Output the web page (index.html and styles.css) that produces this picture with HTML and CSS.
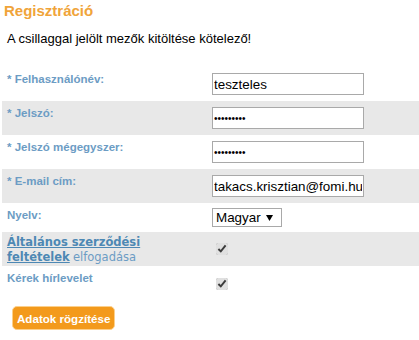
FILE: index.html
```html
<!DOCTYPE html>
<html lang="hu">
<head>
<meta charset="UTF-8" />
<title>Regisztráció</title>
<link rel="stylesheet" href="styles.css">
</head>
<body>
  <h2 class="title">Regisztráció</h2>
  <p class="note">A csillaggal jelölt mezők kitöltése kötelező!</p>
  <form>
    <table class="reg">
      <tr>
        <td class="lbl">* Felhasználónév:</td>
        <td class="fld"><input type="text" class="txt" value="teszteles"></td>
      </tr>
      <tr class="alt">
        <td class="lbl">* Jelszó:</td>
        <td class="fld"><input type="password" class="txt" value="123456789"></td>
      </tr>
      <tr>
        <td class="lbl">* Jelszó mégegyszer:</td>
        <td class="fld"><input type="password" class="txt" value="123456789"></td>
      </tr>
      <tr class="alt">
        <td class="lbl">* E-mail cím:</td>
        <td class="fld"><input type="text" class="txt" value="takacs.krisztian@fomi.hu"></td>
      </tr>
      <tr class="short">
        <td class="lbl">Nyelv:</td>
        <td class="fld">
          <select class="sel">
            <option>Magyar</option>
            <option>English</option>
          </select>
        </td>
      </tr>
      <tr class="alt chk-row">
        <td class="lbl"><div class="terms-wrap"><a href="#" class="terms">Általános szerződési feltételek</a> <span class="plain">elfogadása</span></div></td>
        <td class="fld"><input type="checkbox" class="chk" checked></td>
      </tr>
      <tr class="last">
        <td class="lbl">Kérek hírlevelet</td>
        <td class="fld"><input type="checkbox" class="chk" checked></td>
      </tr>
    </table>
    <button type="button" class="btn">Adatok rögzítése</button>
  </form>
</body>
</html>
```

FILE: styles.css
```css
html, body {
  margin: 0; padding: 0;
  background: #fff;
  font-family: "Liberation Sans", Arial, sans-serif;
  color: #000;
}
.title {
  margin: 0;
  padding: 3px 4px 0 4px;
  font-size: 15px;
  line-height: 16px;
  font-weight: 700;
  color: #f0a43a;
}
.note {
  margin: 13px 0 0 0;
  padding-left: 7px;
  font-size: 13px;
  line-height: 14px;
}
.reg {
  margin: 21px 0 0 2px;
  width: 417px;
  border-collapse: collapse;
}
.reg td {
  padding: 0;
  vertical-align: top;
}
.alt td { background: #e8e8e8; }
.lbl {
  box-sizing: border-box;
  width: 204px;
  height: 34px;
  padding: 6px 0 0 5px !important;
  font-size: 11.5px;
  line-height: 13px;
  font-weight: 700;
  color: #6c9cc4;
}
.fld {
  padding: 6px 0 6px 6px !important;
  line-height: 0;
}
.txt {
  box-sizing: border-box;
  width: 152px;
  height: 22px;
  margin: 0;
  padding: 1px 1px;
  border: 1px solid #a9a9a9;
  font-family: "Liberation Sans", Arial, sans-serif;
  font-size: 13.4px;
  color: #000;
  background: #fff;
}
input[type=password].txt {
  font-size: 10px;
}
.short .lbl { height: 29px; }
.short .fld { padding: 5px 0 5px 6px !important; }
.sel {
  box-sizing: border-box;
  width: 70px;
  height: 19px;
  margin: 0;
  padding: 0 0 0 3px;
  border: 1px solid #a9a9a9;
  border-radius: 0;
  -webkit-appearance: none;
  appearance: none;
  background: #fff url("data:image/svg+xml,%3Csvg xmlns='http://www.w3.org/2000/svg' width='7' height='6'%3E%3Cpath d='M0 0h7L3.5 6z' fill='%23000'/%3E%3C/svg%3E") no-repeat right 8px center;
  font-family: "Liberation Sans", Arial, sans-serif;
  font-size: 13.4px;
  line-height: 17px;
  color: #000;
}
.chk-row .lbl {
  padding-top: 3px !important;
  line-height: 15px;
}
.chk-row .fld { padding-top: 11px !important; }
.terms-wrap { width: 150px; }
.terms {
  font-family: "DejaVu Sans", Verdana, sans-serif;
  font-size: 11.5px;
  color: #4d88b4;
  text-decoration: underline;
}
.plain {
  font-weight: 400;
  font-size: 11.5px;
  font-family: "DejaVu Sans", Verdana, sans-serif;
  color: #6c9cc4;
}
.last .lbl { height: 30px; }
.last .fld { padding-top: 12px !important; padding-bottom: 0 !important; }
.chk {
  display: block;
  margin: 0 0 0 4px;
  width: 12px;
  height: 12px;
  accent-color: #e0e0e0;
}
.btn {
  display: block;
  margin: 10px 0 0 12px;
  padding: 0 4px;
  height: 24px;
  border: 1px solid #fcd08c;
  border-radius: 5px;
  background: #f39a1c;
  color: #fff;
  font-family: "Liberation Sans", Arial, sans-serif;
  font-size: 11.6px;
  font-weight: 700;
  cursor: pointer;
}
```
